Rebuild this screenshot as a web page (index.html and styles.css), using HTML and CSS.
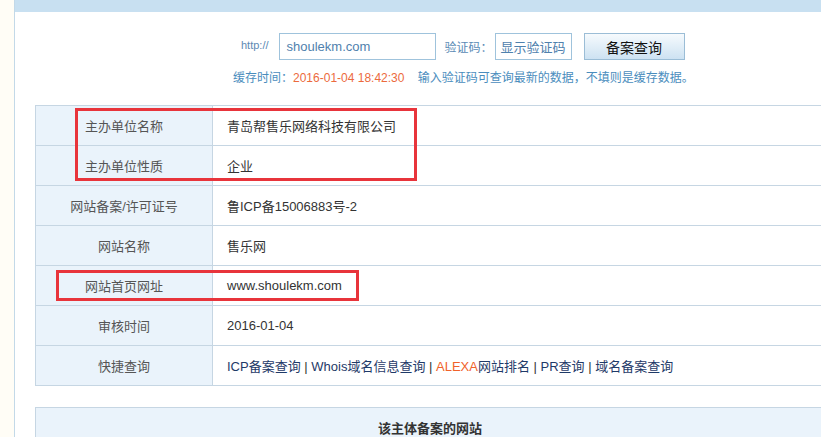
FILE: index.html
```html
<!DOCTYPE html>
<html lang="zh-CN">
<head>
<meta charset="utf-8">
<title>备案查询</title>
<link rel="stylesheet" href="styles.css">
</head>
<body>
<div class="page">
  <div class="side"></div>
  <div class="main">
    <div class="topbar"></div>
    <div class="search">
      <span class="http">http://</span>
      <div class="url">shoulekm.com</div>
      <span class="code-label">验证码：</span>
      <div class="captcha">显示验证码</div>
      <div class="btn">备案查询</div>
    </div>
    <div class="cache">缓存时间：<span class="date">2016-01-04 18:42:30</span>&nbsp;&nbsp;&nbsp;&nbsp;输入验证码可查询最新的数据，不填则是缓存数据。</div>
    <div class="info-wrap">
      <table class="info">
        <tr><td class="k">主办单位名称</td><td class="v">青岛帮售乐网络科技有限公司</td></tr>
        <tr><td class="k">主办单位性质</td><td class="v">企业</td></tr>
        <tr><td class="k">网站备案/许可证号</td><td class="v">鲁ICP备15006883号-2</td></tr>
        <tr><td class="k">网站名称</td><td class="v">售乐网</td></tr>
        <tr><td class="k">网站首页网址</td><td class="v">www.shoulekm.com</td></tr>
        <tr><td class="k">审核时间</td><td class="v">2016-01-04</td></tr>
        <tr><td class="k">快捷查询</td><td class="v links"><a>ICP备案查询</a> | <a>Whois域名信息查询</a> | <a><span class="alexa">ALEXA</span>网站排名</a> | <a>PR查询</a> | <a>域名备案查询</a></td></tr>
      </table>
      <div class="hl hl-1"></div>
      <div class="hl hl-2"></div>
    </div>
    <table class="sites">
      <tr><th>该主体备案的网站</th></tr>
    </table>
  </div>
</div>
</body>
</html>
```

FILE: styles.css
```css
html, body {
  margin: 0;
  padding: 0;
  background: #fff;
  font-family: "Liberation Sans", "Noto Sans CJK SC", sans-serif;
  overflow: hidden;
}
.page {
  display: flex;
  min-height: 437px;
}
.side {
  flex: none;
  width: 14px;
  background: #fffdf6;
  border-right: 1px solid #c3d9e8;
}
.main {
  flex: 1;
  min-width: 0;
}
.topbar {
  height: 12px;
  background: #c8e0f1;
}
.search {
  display: flex;
  align-items: center;
  height: 27px;
  margin-top: 21px;
  padding-left: 226px;
}
.http {
  font-size: 11px;
  color: #5d89b3;
  margin-right: 10px;
  margin-top: -4px;
}
.url {
  box-sizing: border-box;
  width: 157px;
  height: 27px;
  border: 1px solid #9fc3dc;
  font-size: 13px;
  color: #4f81ad;
  padding-left: 7px;
  display: flex;
  align-items: center;
}
.code-label {
  margin-left: 9px;
  font-size: 12px;
  color: #5a8ab5;
}
.captcha {
  box-sizing: border-box;
  margin-left: 2px;
  width: 77px;
  height: 27px;
  border: 1px solid #9fc3dc;
  font-size: 13px;
  color: #4f81ad;
  display: flex;
  align-items: center;
  justify-content: center;
}
.btn {
  box-sizing: border-box;
  margin-left: 12px;
  width: 101px;
  height: 27px;
  border: 1px solid #9bbdd6;
  background: linear-gradient(#f6fafd, #cde2f2);
  font-size: 14px;
  color: #111;
  display: flex;
  align-items: center;
  justify-content: center;
}
.cache {
  margin-top: 8px;
  padding-left: 218px;
  height: 20px;
  line-height: 20px;
  font-size: 12px;
  color: #4a8dbd;
  white-space: nowrap;
}
.date {
  color: #ec6a3d;
}
.info-wrap {
  position: relative;
  margin: 17px 0 0 20px;
  width: 790px;
}
table {
  border-collapse: collapse;
  width: 790px;
}
.info td {
  height: 39px;
  padding: 0;
  border: 1px solid #c6d6e3;
  font-size: 13px;
}
.info .k {
  width: 176px;
  background: #eaf3fb;
  color: #555;
  text-align: center;
}
.info .v {
  padding-left: 14px;
  color: #333;
}
.links a {
  color: #1f3a68;
}
.links .alexa {
  color: #f0622a;
}
.hl {
  position: absolute;
  box-sizing: border-box;
  border: 3px solid #e8343b;
}
.hl-1 {
  left: 40px;
  top: 3px;
  width: 342px;
  height: 73px;
}
.hl-2 {
  left: 21px;
  top: 165px;
  width: 303px;
  height: 31px;
}
.sites {
  margin: 21px 0 0 20px;
}
.sites th {
  height: 39px;
  padding: 0;
  border: 1px solid #c6d6e3;
  background: #eaf3fb;
  font-size: 13px;
  font-weight: bold;
  color: #333;
  text-align: center;
}
```
